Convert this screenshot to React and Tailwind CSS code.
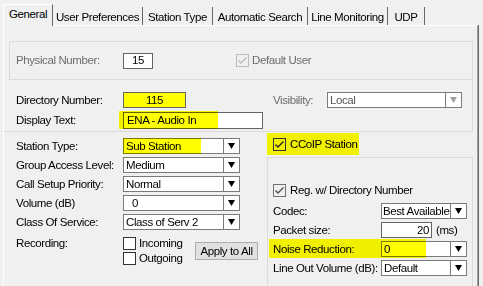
import React from 'react';

const Arrow = ({ disabled }) => (
  <div className="flex h-full w-[16px] shrink-0 items-center justify-center border-l border-[#7a7a7a] bg-white">
    <svg width="7" height="6" viewBox="0 0 7 6">
      <path d="M0 0H7L3.5 6Z" fill={disabled ? '#a0a0a0' : '#000'} />
    </svg>
  </div>
);

const Select = ({ className, textClass = 'pl-[2px]', disabled, children }) => (
  <div className={'relative flex h-[16px] shrink-0 border border-[#7a7a7a] bg-white ' + className}>
    <div className={'flex flex-1 items-center overflow-hidden whitespace-nowrap ' + textClass + (disabled ? ' text-[#555]' : '')}>
      {children}
    </div>
    <Arrow disabled={disabled} />
  </div>
);

const Check = ({ checked, tone = 'dark', bg = 'bg-white' }) => (
  <div
    className={
      'flex h-[13px] w-[13px] shrink-0 items-center justify-center border ' +
      bg +
      (tone === 'light' ? ' border-[#bcbcbc]' : tone === 'mid' ? ' border-[#707070]' : ' border-[#333]')
    }
  >
    {checked && (
      <svg width="11" height="11" viewBox="0 0 11 11">
        <path
          d="M1.5 5.5L4 8L9.5 2.5"
          fill="none"
          stroke={tone === 'light' ? '#bcbcbc' : tone === 'mid' ? '#505050' : '#222'}
          strokeWidth="1.4"
        />
      </svg>
    )}
  </div>
);

const tabs = [
  { label: 'User Preferences', w: 'w-[90px]' },
  { label: 'Station Type', w: 'w-[70px]' },
  { label: 'Automatic Search', w: 'w-[95px]' },
  { label: 'Line Monitoring', w: 'w-[80px]' },
  { label: 'UDP', w: 'w-[37px]' },
];

const App = () => {
  return (
    <div className="h-[286px] w-[483px] overflow-hidden bg-[#f0f0f0] font-['Liberation_Sans',Arial,sans-serif] text-[11.5px] leading-[13px] tracking-[-0.4px] text-black">
      {/* Tabs */}
      <div className="flex h-[25px] items-end pl-[3px]">
        <div className="relative z-10 -mb-px flex h-[22px] w-[50px] justify-center border-l border-r border-t border-l-white border-r-[#696969] border-t-white bg-[#f0f0f0] pt-[3px]">
          General
        </div>
        {tabs.map((t) => (
          <div
            key={t.label}
            className={'flex h-[18px] justify-center whitespace-nowrap border-r border-[#696969] pt-[4px] ' + t.w}
          >
            {t.label}
          </div>
        ))}
      </div>

      {/* Page */}
      <div className="ml-[3px] h-[265px] w-[475px] border-l border-r border-t border-l-white border-r-[#a0a0a0] border-t-white shadow-[1px_0_0_#696969]">
        {/* Physical number */}
        <div className="ml-[5px] mt-[15px] flex h-[39px] w-[464px] items-center border border-[#dcdcdc] pl-[6px]">
          <span className="w-[107px] text-[#6d6d6d]">Physical Number:</span>
          <div className="flex h-[16px] w-[30px] items-center justify-center border border-[#646464] bg-white">15</div>
          <div className="ml-[83px] flex items-center gap-[3px] text-[#6d6d6d]">
            <Check checked tone="light" bg="bg-[#f0f0f0]" />
            Default User
          </div>
        </div>

        {/* Directory */}
        <div className="flex h-[52px] w-[469px] flex-col gap-[4px] border-b border-r border-[#dcdcdc] pl-[12px] pt-[12px]">
          <div className="flex h-[16px] items-center">
            <span className="w-[107px]">Directory Number:</span>
            <div className="flex h-[16px] w-[63px] items-center justify-center border border-[#646464] bg-[#ffff00]">115</div>
            <span className="ml-[87px] w-[54px] text-[#6d6d6d]">Visibility:</span>
            <Select disabled className="w-[135px]">Local</Select>
          </div>
          <div className="flex h-[17px] items-center">
            <span className="w-[107px]">Display Text:</span>
            <div className="relative flex h-[17px] w-[140px] items-center border border-[#646464] bg-white pl-[3px]">
              <span className="absolute -left-[5px] -top-[2px] h-[18px] w-[99px] bg-[#ffff00] mix-blend-multiply" />
              ENA - Audio In
            </div>
          </div>
        </div>

        <div className="flex">
          {/* Left column */}
          <div className="flex w-[263px] flex-col gap-[3px] pl-[12px] pt-[6px]">
            <div className="flex h-[16px] items-center">
              <span className="w-[107px]">Station Type:</span>
              <Select className="w-[117px]">
                <span className="absolute -left-px -top-px h-[16px] w-[78px] bg-[#ffff00] mix-blend-multiply" />
                Sub Station
              </Select>
            </div>
            <div className="flex h-[16px] items-center">
              <span className="w-[107px]">Group Access Level:</span>
              <Select className="w-[117px]">Medium</Select>
            </div>
            <div className="flex h-[16px] items-center">
              <span className="w-[107px]">Call Setup Priority:</span>
              <Select className="w-[117px]">Normal</Select>
            </div>
            <div className="flex h-[16px] items-center">
              <span className="w-[107px]">Volume (dB)</span>
              <Select className="w-[117px]" textClass="pl-[8px]">0</Select>
            </div>
            <div className="flex h-[16px] items-center">
              <span className="w-[107px]">Class Of Service:</span>
              <Select className="w-[117px]">Class of Serv 2</Select>
            </div>
            <div className="mt-[4px] flex items-center">
              <span className="w-[107px] self-start">Recording:</span>
              <div className="flex w-[72px] flex-col gap-[2px]">
                <div className="flex items-center gap-[3px]">
                  <Check />
                  Incoming
                </div>
                <div className="flex items-center gap-[3px]">
                  <Check />
                  Outgoing
                </div>
              </div>
              <button className="flex h-[18px] w-[63px] items-center justify-center border border-[#adadad] bg-[#e1e1e1]">
                Apply to All
              </button>
            </div>
          </div>

          {/* Right column */}
          <div className="flex w-[206px] flex-col pt-[1px]">
            <div className="flex h-[22px] w-[92px] items-center gap-[4px] bg-[#f0f000] pl-[6px]">
              <Check checked bg="bg-transparent" />
              CCoIP Station
            </div>
            <div className="mt-[2px] flex h-[140px] w-[206px] flex-col gap-[3px] border border-[#dcdcdc] pl-[5px] pt-[25px]">
              <div className="mb-[3px] flex h-[14px] items-center gap-[4px]">
                <Check checked tone="mid" bg="bg-[#f0f0f0]" />
                Reg. w/ Directory Number
              </div>
              <div className="flex h-[16px] items-center">
                <span className="w-[108px]">Codec:</span>
                <Select className="w-[86px]" textClass="pl-[1px]">Best Available</Select>
              </div>
              <div className="flex h-[16px] items-center">
                <span className="w-[108px]">Packet size:</span>
                <div className="flex h-[16px] w-[51px] items-center justify-end border border-[#646464] bg-white pr-[2px]">20</div>
                <span className="ml-[4px]">(ms)</span>
              </div>
              <div className="relative flex h-[16px] items-center">
                <span className="absolute -left-[4px] -top-[2px] z-10 h-[19px] w-[157px] bg-[#ffff00] mix-blend-multiply" />
                <span className="w-[108px]">Noise Reduction:</span>
                <Select className="w-[86px]">0</Select>
              </div>
              <div className="flex h-[16px] items-center">
                <span className="w-[108px]">Line Out Volume (dB):</span>
                <Select className="w-[86px]">Default</Select>
              </div>
            </div>
          </div>
        </div>
      </div>
    </div>
  );
};

export default App;
